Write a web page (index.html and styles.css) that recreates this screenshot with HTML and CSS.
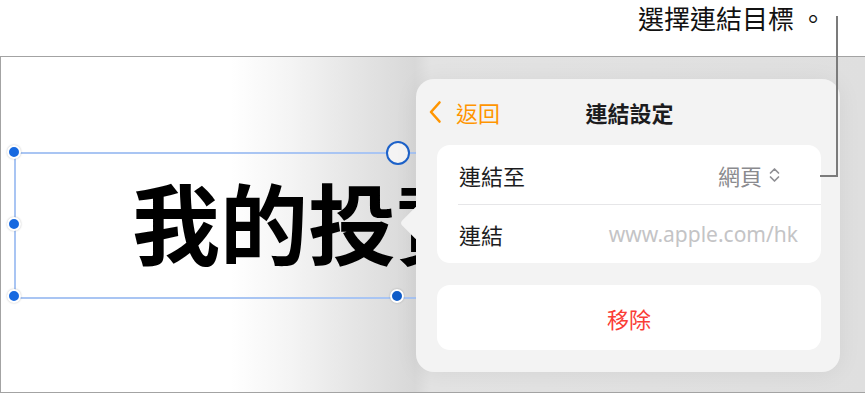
FILE: index.html
```
<!DOCTYPE html>
<html lang="zh-Hant">

<head>
    <meta charset="UTF-8">
    <meta name="viewport" content="width=device-width, initial-scale=1.0">
    <title>連結設定</title>
    <link rel="stylesheet" href="styles.css">
</head>

<body>
    <div class="callout">選擇連結目標<span class="dot">。</span></div>
    <div class="leader"></div>

    <section class="screen">
        <div class="textbox">
            <span class="big-text">我的投資</span>
            <span class="handle tl"></span>
            <span class="handle ml"></span>
            <span class="handle bl"></span>
            <span class="handle bm"></span>
            <span class="handle-ring"></span>
        </div>

        <div class="popover">
            <header class="pop-head">
                <button class="back">
                    <svg width="14" height="24" viewBox="0 0 14 24">
                        <path d="M11.5 2.5 L3 12 L11.5 21.5" fill="none" stroke="#ff9500" stroke-width="2.6"
                            stroke-linecap="round" stroke-linejoin="round" />
                    </svg>
                    返回
                </button>
                <h2>連結設定</h2>
                <span></span>
            </header>

            <div class="group">
                <div class="row row-to">
                    <span>連結至</span>
                    <span class="value">網頁
                        <svg width="13" height="18" viewBox="0 0 13 18">
                            <path d="M2.5 7 L6.5 3 L10.5 7 M2.5 11 L6.5 15 L10.5 11" fill="none" stroke="#8e8e93"
                                stroke-width="1.7" stroke-linecap="round" stroke-linejoin="round" />
                        </svg>
                    </span>
                </div>
                <div class="row row-link">
                    <span>連結</span>
                    <span class="url">www.apple.com/hk</span>
                </div>
            </div>

            <div class="group remove">移除</div>
        </div>
    </section>
</body>

</html>
```

FILE: styles.css
```
body {
    margin: 0;
    font-family: "Noto Sans", "Noto Sans CJK TC", sans-serif;
    color: #1c1c1e;
    background: #fff;
}

.callout {
    height: 56px;
    padding: 4px 39px 0 0;
    font-size: 26px;
    line-height: 30px;
    text-align: right;
    box-sizing: border-box;
    color: #111;
}

.callout .dot {
    margin-left: 6px;
}

.leader {
    position: absolute;
    left: 820px;
    top: 16px;
    width: 16px;
    height: 159px;
    border-right: 2px solid #7b7b7b;
    border-bottom: 2px solid #7b7b7b;
    z-index: 5;
}

.screen {
    position: relative;
    height: 337px;
    box-sizing: border-box;
    border-top: 1px solid #a3a3a3;
    border-left: 1px solid #a3a3a3;
    border-bottom: 1px solid #a3a3a3;
    overflow: hidden;
    padding: 95px 0 0 13px;
    background: linear-gradient(90deg, #fff 0, #fff 230px, #f4f4f4 290px, #e6e6e6 350px, #d8d8d8 414px, #e3e3e3 430px, #dfdfdf 100%);
}

/* selected text box, its right part sits under the popover */
.textbox {
    position: relative;
    width: 767px;
    height: 147px;
    box-sizing: border-box;
    border: 2px solid #a9c5f3;
    padding: 22px 0 0 116px;
}

.big-text {
    display: block;
    font-family: "Noto Sans CJK TC", sans-serif;
    font-size: 88px;
    font-weight: 700;
    line-height: 88px;
    color: #000;
    white-space: nowrap;
}

.handle {
    position: absolute;
    width: 10px;
    height: 10px;
    border-radius: 50%;
    background: #1769e0;
    border: 2px solid #fff;
    box-shadow: 0 0 2px rgba(0, 0, 0, 0.25);
}

.tl { left: -9px; top: -9px; }
.ml { left: -9px; top: 63px; }
.bl { left: -9px; top: 135px; }
.bm { left: 374px; top: 135px; background: #0f5cc8; }

.handle-ring {
    position: absolute;
    left: 370px;
    top: -13px;
    width: 20px;
    height: 20px;
    border-radius: 50%;
    border: 2px solid #1d62c9;
    background: #f4f4f4;
}

/* popover */
.popover {
    position: absolute;
    left: 415px;
    top: 22px;
    width: 424px;
    box-sizing: border-box;
    padding: 0 19px 22px 21px;
    background: #f3f3f3;
    border-radius: 18px;
    box-shadow: 0 2px 24px rgba(0, 0, 0, 0.06);
}

.popover::before {
    content: "";
    position: absolute;
    left: -11px;
    top: 131px;
    width: 26px;
    height: 26px;
    background: #f3f3f3;
    border-radius: 4px;
    transform: rotate(45deg);
}

.pop-head {
    position: relative;
    height: 66px;
    margin-left: -9px;
    display: grid;
    grid-template-columns: 1fr auto 1fr;
    align-items: center;
}

.back {
    display: flex;
    align-items: center;
    gap: 14px;
    padding: 0;
    border: 0;
    background: none;
    font: inherit;
    font-size: 22px;
    color: #ff9500;
    justify-self: start;
}

.pop-head h2 {
    margin: 0 0 0 10px;
    font-size: 22px;
    font-weight: 700;
}

.group {
    position: relative;
    background: #fff;
    border-radius: 13px;
}

.row {
    height: 59px;
    display: flex;
    align-items: center;
    justify-content: space-between;
    padding-left: 22px;
    font-size: 22px;
}

.row-to {
    padding-right: 40px;
}

.row-link {
    height: 58px;
    padding-right: 23px;
    border-top: 1px solid #e6e6e8;
    margin-left: 21px;
    padding-left: 1px;
}

.value {
    display: flex;
    align-items: center;
    gap: 6px;
    color: #8a8a8e;
}

.url {
    color: #c4c4c6;
    font-size: 21px;
}

.remove {
    margin-top: 22px;
    height: 65px;
    display: flex;
    align-items: center;
    justify-content: center;
    font-size: 22px;
    color: #fa3d36;
}
```
